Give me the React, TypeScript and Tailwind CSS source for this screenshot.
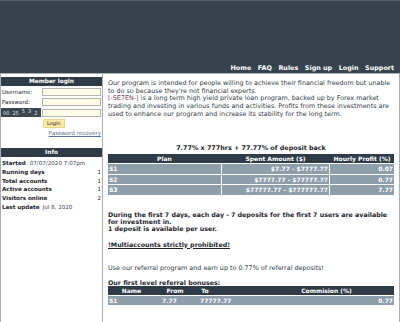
import React from 'react'

const font = { fontFamily: '"DejaVu Sans", Verdana, sans-serif' }

const navItems = ['Home', 'FAQ', 'Rules', 'Sign up', 'Login', 'Support']

const plans = [
  { name: 'S1', range: '$7.77 - $7777.77', profit: '0.07' },
  { name: 'S2', range: '$7777.77 - $77777.77', profit: '0.77' },
  { name: 'S3', range: '$77777.77 - $777777.77', profit: '7.77' },
]

const stats = [
  { label: 'Running days', value: '1' },
  { label: 'Total accounts', value: '1' },
  { label: 'Active accounts', value: '1' },
  { label: 'Visitors online', value: '2' },
]

function Header() {
  return (
    <div className="h-[73px] bg-[#36434e] border-t border-[#56626c] flex items-end justify-end pr-[6px] pb-[1px]">
      <nav className="flex items-center text-[6.4px] font-bold text-white leading-[8px]">
        {navItems.map((item, i) => (
          <React.Fragment key={item}>
            {i > 0 && <span className="text-[#9aa4ad] font-normal px-[2.5px] text-[5px]">·</span>}
            <a href="#">{item}</a>
          </React.Fragment>
        ))}
      </nav>
    </div>
  )
}

function PanelTitle({ children }: { children: React.ReactNode }) {
  return (
    <div className="h-[9px] bg-[#2f3c47] text-white font-bold text-[5.8px] leading-[9px] text-center">
      {children}
    </div>
  )
}

function Captcha() {
  return (
    <div className="w-[40px] h-[9px] bg-[#3a4650] text-[#dfe5ea] text-[5px] leading-[9px] flex items-center pl-[2px] gap-[3px] overflow-hidden">
      <span className="relative top-[1px]">00</span>
      <span className="relative top-[1px]">25</span>
      <span className="relative -top-[1px]">5</span>
      <span className="relative -top-[1px]">3</span>
      <span className="relative top-[1px]">2</span>
    </div>
  )
}

function LoginBox() {
  return (
    <div>
      <PanelTitle>Member login</PanelTitle>
      <div className="flex flex-col gap-[2px] pt-[2px] pr-[1px] text-[5.6px] leading-[8px] text-[#1d262d]">
        <div className="flex items-center justify-between pl-[1px]">
          <span>Username:</span>
          <input className="w-[59px] h-[8px] bg-[#fffbe6] border border-[#b3b3b3] outline-none" />
        </div>
        <div className="flex items-center justify-between pl-[1px]">
          <span>Password:</span>
          <input type="password" className="w-[59px] h-[8px] bg-[#fffbe6] border border-[#b3b3b3] outline-none" />
        </div>
        <div className="flex items-center justify-between">
          <Captcha />
          <input className="w-[59px] h-[8px] bg-[#fffbe6] border border-[#b3b3b3] outline-none" />
        </div>
        <div className="pl-[42px]">
          <button className="h-[9px] px-[3px] bg-[#fde8a4] border border-[#ead48e] text-[5px] leading-[7px] text-[#1d262d]">
            Login
          </button>
        </div>
        <div className="text-right -mt-[1px]">
          <a href="#" className="text-[#5a6f99] underline">Password recovery</a>
        </div>
      </div>
    </div>
  )
}

function InfoBox() {
  return (
    <div className="mt-[11px]">
      <PanelTitle>Info</PanelTitle>
      <div className="pt-[2px] pl-[1px] pr-[1px] text-[5.6px] leading-[8.8px] text-[#1d262d]">
        <div>
          <span className="font-bold">Started</span>
          <span className="pl-[4px] text-[#3a4650]">07/07/2020 7:07pm</span>
        </div>
        {stats.map((s) => (
          <div key={s.label} className="flex justify-between">
            <span className="font-bold">{s.label}</span>
            <span>{s.value}</span>
          </div>
        ))}
        <div>
          <span className="font-bold">Last update</span>
          <span className="pl-[3px] text-[#3a4650]">Jul 8, 2020</span>
        </div>
      </div>
    </div>
  )
}

function PlansTable() {
  return (
    <div className="flex flex-col gap-[1px] text-[6px] leading-[9px] font-bold text-white">
      <div className="grid grid-cols-[113px_107px_1fr] gap-[1px] bg-[#2f3c47]">
        <div className="text-center">Plan</div>
        <div className="text-center">Spent Amount ($)</div>
        <div className="text-center">Hourly Profit (%)</div>
      </div>
      {plans.map((p) => (
        <div key={p.name} className="grid grid-cols-[113px_107px_1fr] gap-[1px] h-[9.5px]">
          <div className="bg-[#8e9eab] pl-[1px]">{p.name}</div>
          <div className="bg-[#8e9eab] text-right pr-[1px]">{p.range}</div>
          <div className="bg-[#8e9eab] text-right pr-[1px]">{p.profit}</div>
        </div>
      ))}
    </div>
  )
}

function ReferralTable() {
  return (
    <div className="flex flex-col gap-[1px] text-[6px] leading-[9px] font-bold text-white">
      <div className="flex bg-[#2f3c47]">
        <div className="w-[47px] text-center">Name</div>
        <div className="w-[40px] text-center">From</div>
        <div className="w-[20px] text-center">To</div>
        <div className="flex-1 pl-[44px] text-center">Commision (%)</div>
      </div>
      <div className="flex bg-[#8e9eab] h-[8.5px]">
        <div className="w-[52px] pl-[1px]">S1</div>
        <div className="w-[38px] pl-[2px]">7.77</div>
        <div className="pl-[2px]">77777.77</div>
        <div className="flex-1 text-right pr-[1px]">0.77</div>
      </div>
    </div>
  )
}

function MainContent() {
  return (
    <div className="flex-1 border-r border-[#a7adb2] pl-[5px] pr-[5px] pt-[6px] text-[6.4px] leading-[7.7px] text-[#2f3b45]">
      <p>
        Our program is intended for people willing to achieve their financial freedom but unable
        to do so because they're not financial experts.
        <br />
        <span className="text-[#7b3d5e]">[-SE7EN-]</span> is a long term high yield private loan program, backed up by Forex market
        trading and investing in various funds and activities. Profits from these investments are
        used to enhance our program and increase its stability for the long term.
      </p>
      <div className="mt-[26px] text-center font-bold text-[6.4px] text-[#1d262d]">
        7.77% x 777hrs + 77.77% of deposit back
      </div>
      <div className="mt-[2px]">
        <PlansTable />
      </div>
      <div className="mt-[16px] font-bold text-[6.3px] text-[#1d262d] leading-[7px]">
        During the first 7 days, each day - 7 deposits for the first 7 users are available
        for investment in.
        <br />
        1 deposit is available per user.
      </div>
      <div className="mt-[9px] font-bold text-[6.3px] underline text-[#1d262d]">!Multiaccounts strictly prohibited!</div>
      <div className="mt-[17px]">Use our referral program and earn up to 0.77% of referral deposits!</div>
      <div className="mt-[7px] font-bold text-[6.3px] text-[#1d262d] leading-[6px]">Our first level referral bonuses:</div>
      <ReferralTable />
    </div>
  )
}

export default function App() {
  return (
    <div className="w-[400px] h-[322px] bg-white overflow-hidden" style={font}>
      <Header />
      <div className="h-[1px] bg-[#aab1b7]" />
      <div className="flex h-[248px]">
        <div className="w-[103px] border-l border-r border-[#a7adb2] pt-[3px]">
          <LoginBox />
          <InfoBox />
        </div>
        <MainContent />
      </div>
    </div>
  )
}
